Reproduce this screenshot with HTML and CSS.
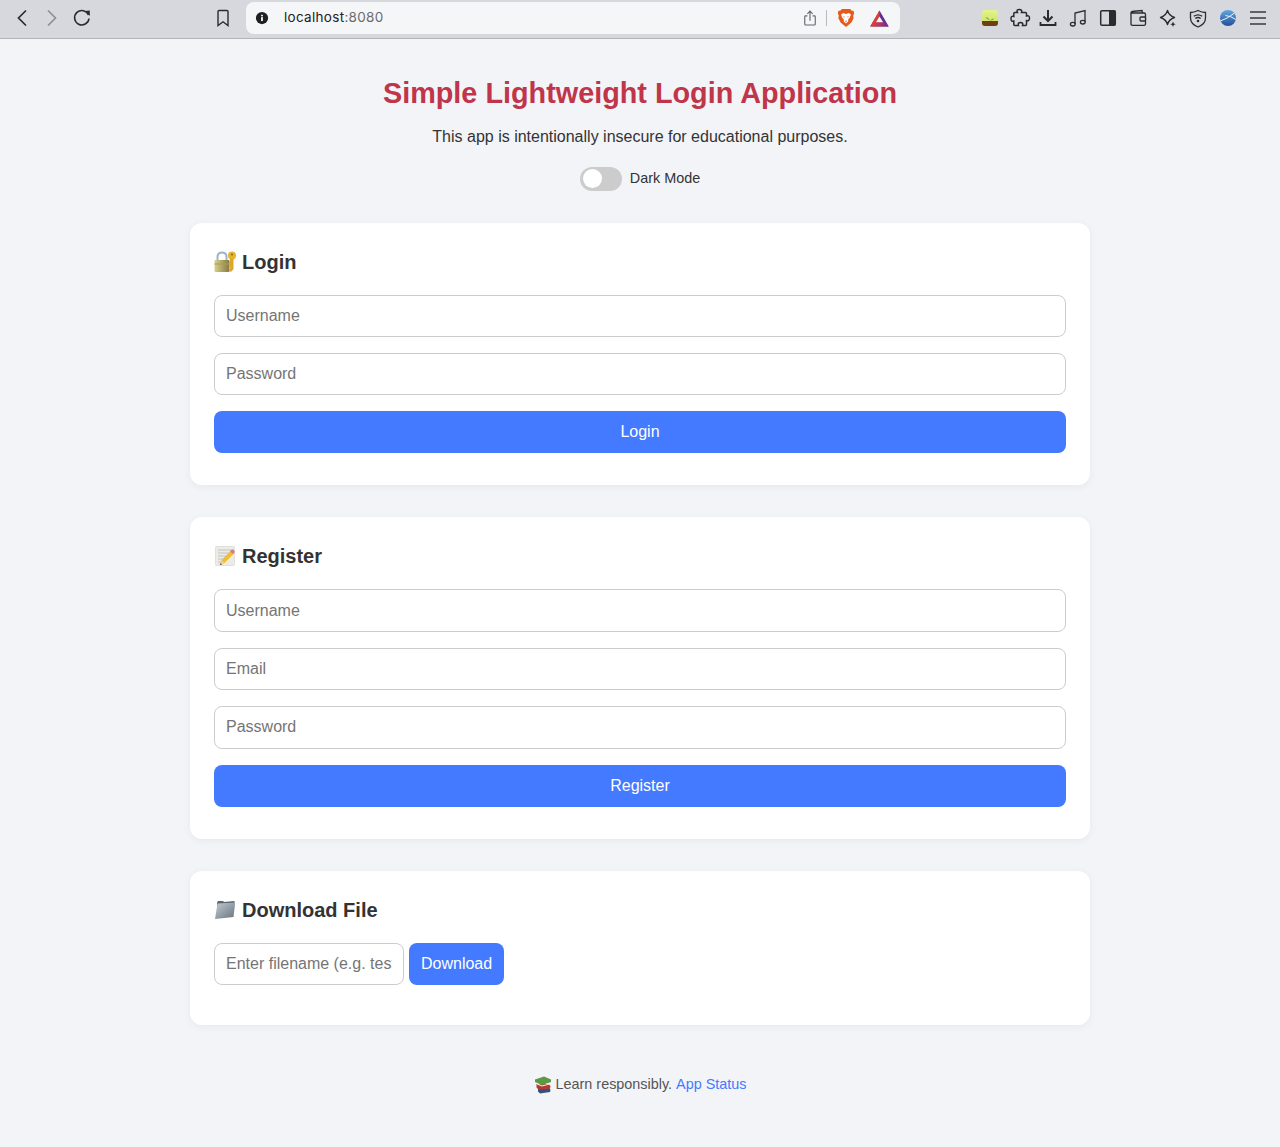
FILE: index.html
```html
<!DOCTYPE html>
<html lang="en">
<head>
  <meta charset="UTF-8" />
  <meta name="viewport" content="width=device-width, initial-scale=1.0" />
  <title>Simple Lightweight Login Application</title>
  <link rel="stylesheet" href="styles.css">
</head>
<body>
  <div class="toolbar">
    <div class="nav">
      <svg class="tool" viewBox="0 0 30 30"><path d="M19 7.5 L11.5 15 L19 22.5" fill="none" stroke="#2b2b2e" stroke-width="1.7"/></svg>
      <svg class="tool" viewBox="0 0 30 30"><path d="M11 7.5 L18.5 15 L11 22.5" fill="none" stroke="#8e8f94" stroke-width="1.7"/></svg>
      <svg class="tool" viewBox="0 0 30 30"><path d="M21.5 12 A7.2 7.2 0 1 0 22 15.5" fill="none" stroke="#2b2b2e" stroke-width="1.6"/><path d="M18 8 L22.8 7.5 L22.8 13 Z" fill="#2b2b2e"/></svg>
    </div>
    <svg class="tool bookmark" viewBox="0 0 30 30"><path d="M10 8.5 Q10 7.5 11 7.5 L19 7.5 Q20 7.5 20 8.5 L20 22.5 L15 18.8 L10 22.5 Z" fill="none" stroke="#2b2b2e" stroke-width="1.4"/></svg>
    <div class="urlbar">
      <svg class="info" viewBox="0 0 16 16"><circle cx="8" cy="8" r="7" fill="#1f1f22"/><rect x="7" y="7" width="2" height="4.5" fill="#fff"/><rect x="7" y="4.3" width="2" height="1.8" fill="#fff"/></svg>
      <span class="url">localhost<span class="port">:8080</span></span>
      <svg class="share" viewBox="0 0 16 20"><path d="M5 7.5 L3 7.5 Q2 7.5 2 8.5 L2 17 Q2 18 3 18 L13 18 Q14 18 14 17 L14 8.5 Q14 7.5 13 7.5 L11 7.5" fill="none" stroke="#66676b" stroke-width="1.3"/><path d="M8 13 L8 2.5 M5 5.2 L8 2.2 L11 5.2" fill="none" stroke="#66676b" stroke-width="1.3"/></svg>
      <span class="divider"></span>
      <svg class="brave" viewBox="0 0 20 22"><path d="M5.5 1 L14.5 1 L16.5 3 L18.5 3 L19 6 L18 8.5 L18.5 11 L16 16 L10 21 L4 16 L1.5 11 L2 8.5 L1 6 L1.5 3 L3.5 3 Z" fill="#e8591c"/><path d="M7 5.5 L10 6.5 L13 5.5 L15.5 7 L14 11 L12.5 12.5 L12.5 15 L10 17 L7.5 15 L7.5 12.5 L6 11 L4.5 7 Z" fill="#fff"/><path d="M8.5 13.5 L10 14.5 L11.5 13.5 L10 16 Z" fill="#e8591c"/><path d="M7 9 L9 10 L7.5 10.5 Z M13 9 L11 10 L12.5 10.5 Z" fill="#e8591c"/></svg>
      <svg class="bat" viewBox="0 0 20 18"><defs><linearGradient id="batbase" x1="0" y1="0" x2="1" y2="0"><stop offset="0" stop-color="#e8452a"/><stop offset="0.45" stop-color="#c8344e"/><stop offset="1" stop-color="#662d91"/></linearGradient></defs><path d="M10 0.5 L19.8 17.5 L0.2 17.5 Z" fill="#662d91"/><path d="M10 0.5 L0.2 17.5 L5.5 13.5 L10 7 Z" fill="#e0402e"/><path d="M0.2 17.5 L5.5 13 L14.5 13 L19.8 17.5 Z" fill="url(#batbase)"/><path d="M10 7 L13.8 13 L6.2 13 Z" fill="#f5f6f8"/></svg>
    </div>
    <div class="extensions">
      <svg class="tool" viewBox="0 0 30 30"><defs><linearGradient id="sprout" x1="0" y1="0" x2="0" y2="1"><stop offset="0" stop-color="#e6f28a"/><stop offset="1" stop-color="#c4e266"/></linearGradient></defs><rect x="7" y="7" width="16" height="16" rx="3" fill="url(#sprout)"/><path d="M7 18 L23 18 L23 20 Q23 23 20 23 L10 23 Q7 23 7 20 Z" fill="#6d3f12"/><path d="M15 17.5 Q13 14 10.5 14 Q12 16.5 15 17.5 Q17 15.5 19.5 15.5 Q17.5 18 15 17.5 Z" fill="#6fa82f"/></svg>
      <svg class="tool" viewBox="0 0 30 30"><path d="M12.5 9.5 Q11 6.5 14.2 6.5 Q17.5 6.5 16.5 9.5 L20.5 9.5 Q21.5 9.5 21.5 10.5 L21.5 13 Q24.5 12 24.5 15 Q24.5 18.5 21.5 17.5 L21.5 21.5 Q21.5 22.5 20.5 22.5 L17.5 22.5 Q18.5 19.5 15.5 19.5 Q12.5 19.5 13.5 22.5 L9.8 22.5 Q8.8 22.5 8.8 21.5 L8.8 18 Q6 19 6 15.5 Q6 12.5 8.8 13.5 L8.8 10.5 Q8.8 9.5 9.8 9.5 Z" fill="none" stroke="#2b2b2e" stroke-width="1.5"/></svg>
      <svg class="tool download" viewBox="0 0 30 30"><path d="M15 7 L15 17.5 M10.5 13.5 L15 18 L19.5 13.5" fill="none" stroke="#2b2b2e" stroke-width="2"/><path d="M7.5 19 L7.5 22 L22.5 22 L22.5 19" fill="none" stroke="#2b2b2e" stroke-width="1.8"/></svg>
      <svg class="tool" viewBox="0 0 30 30"><path d="M12 21 L12 10 L22 7.5 L22 19" fill="none" stroke="#2b2b2e" stroke-width="1.3"/><ellipse cx="9.8" cy="21.2" rx="2.4" ry="1.8" fill="none" stroke="#2b2b2e" stroke-width="1.3"/><ellipse cx="19.8" cy="19.2" rx="2.4" ry="1.8" fill="none" stroke="#2b2b2e" stroke-width="1.3"/></svg>
      <svg class="tool" viewBox="0 0 30 30"><rect x="7.7" y="7.7" width="14.6" height="14.6" rx="1.2" fill="none" stroke="#2b2b2e" stroke-width="1.5"/><rect x="16" y="7.7" width="6.3" height="14.6" fill="#2b2b2e"/></svg>
      <svg class="tool" viewBox="0 0 30 30"><path d="M9 8.5 L19 7.5 L19.5 10 M8 10 Q8 8.5 9.5 8.5 M8 10 L21 10 Q22.5 10 22.5 11.5 L22.5 21 Q22.5 22.3 21 22.3 L9.5 22.3 Q8 22.3 8 21 Z" fill="none" stroke="#2b2b2e" stroke-width="1.3"/><rect x="17" y="14" width="5.5" height="4" rx="1" fill="#d7d8dd" stroke="#2b2b2e" stroke-width="1.3"/></svg>
      <svg class="tool" viewBox="0 0 30 30"><path d="M14.5 7.5 Q16 12.8 21.5 14.5 Q16 16.2 14.5 21.5 Q13 16.2 7.5 14.5 Q13 12.8 14.5 7.5 Z" fill="none" stroke="#2b2b2e" stroke-width="1.4" stroke-linejoin="round"/><path d="M20 18.5 L20.8 20.4 L22.7 21.2 L20.8 22 L20 23.9 L19.2 22 L17.3 21.2 L19.2 20.4 Z" fill="#2b2b2e"/></svg>
      <svg class="tool" viewBox="0 0 30 30"><path d="M15 7.5 Q19 9.5 22.5 9.5 L22.5 15 Q22.5 21 15 24 Q7.5 21 7.5 15 L7.5 9.5 Q11 9.500 15 7.5 Z" fill="none" stroke="#2b2b2e" stroke-width="1.3"/><path d="M10.8 13.3 Q15 10.3 19.2 13.3 M12.3 15.5 Q15 13.5 17.7 15.5" fill="none" stroke="#2b2b2e" stroke-width="1.3"/><circle cx="15" cy="18" r="1.3" fill="#2b2b2e"/></svg>
      <svg class="tool" viewBox="0 0 30 30"><defs><linearGradient id="globe" x1="0" y1="0" x2="0" y2="1"><stop offset="0" stop-color="#62a6dc"/><stop offset="1" stop-color="#234f9e"/></linearGradient></defs><circle cx="15" cy="15" r="8" fill="url(#globe)"/><path d="M7.3 18 Q14 16 21.5 10 M12.5 12.5 Q18 13 22.8 16.5" fill="none" stroke="#eef4fa" stroke-width="1"/></svg>
      <svg class="tool" viewBox="0 0 30 30"><path d="M7 9 L23 9 M7 15 L23 15 M7 21 L23 21" stroke="#3a3a3d" stroke-width="1.5"/></svg>
    </div>
  </div>

  <div class="container">
    <h1>Simple Lightweight Login Application</h1>
    <p class="subtitle">This app is intentionally insecure for educational purposes.</p>

    <div class="theme-row">
      <span class="switch"><span class="knob"></span></span>
      <span>Dark Mode</span>
    </div>

    <div class="card">
      <h2>
        <svg class="emoji" viewBox="0 0 22 22"><defs><linearGradient id="brass" x1="0" y1="0" x2="1" y2="0"><stop offset="0" stop-color="#d9cf8c"/><stop offset="1" stop-color="#85793c"/></linearGradient></defs><path d="M3.5 10 L3.5 6 Q3.5 1.5 8 1.5 Q12.5 1.5 12.5 6 L12.5 10" fill="none" stroke="#9db4cc" stroke-width="2"/><rect x="0.5" y="9" width="15" height="12" rx="1" fill="url(#brass)"/><rect x="0.5" y="12.5" width="15" height="1" fill="#a89c58"/><circle cx="18" cy="4.5" r="4" fill="#e6b52e"/><circle cx="18" cy="3.5" r="1.1" fill="#8f6b14"/><path d="M16 7.5 L19.5 7.5 L19.5 18 L17 21 L15.5 20 L15.5 18 L16.5 17 L15.5 15.5 Z" fill="#dca829"/></svg>
        Login
      </h2>
      <form>
        <input type="text" placeholder="Username" />
        <input type="password" placeholder="Password" />
        <button type="button" class="wide">Login</button>
      </form>
    </div>

    <div class="card">
      <h2>
        <svg class="emoji" viewBox="0 0 22 22"><rect x="1.5" y="1.5" width="19" height="19" rx="1" fill="#ecebe6" stroke="#d3d2cc" stroke-width="0.6"/><path d="M4 5 L18 5 M4 8 L17 8 M4 11 L12 11 M4 14 L9 14 M4 17 L7 17" stroke="#b8b8b6" stroke-width="0.8"/><path d="M6 20 L7.5 15 L17 5.5 L20 8.5 L10.5 18 Z" fill="#f0bd38"/><path d="M16 6.5 L17.5 4.7 Q18.5 4 19.5 4.7 L20.5 6 Q21 7 20.2 8 L19 9 Z" fill="#e2768a"/><path d="M6 20 L7.5 15 L10.5 18 Z" fill="#e9cfa2"/><path d="M6 20 L6.6 18 L8 19.4 Z" fill="#444"/></svg>
        Register
      </h2>
      <form>
        <input type="text" placeholder="Username" />
        <input type="email" placeholder="Email" />
        <input type="password" placeholder="Password" />
        <button type="button" class="wide">Register</button>
      </form>
    </div>

    <div class="card">
      <h2>
        <svg class="emoji" viewBox="0 0 22 22"><defs><linearGradient id="folder" x1="0" y1="0" x2="1" y2="1"><stop offset="0" stop-color="#c3ccd3"/><stop offset="1" stop-color="#66737e"/></linearGradient></defs><path d="M3 4 L4 2 L9 2 L10 3 L20.5 2 L20 14 L3 15 Z" fill="#59646d"/><path d="M3.5 4.5 L21 3.5 L19.5 18 L1 20 Z" fill="url(#folder)"/></svg>
        Download File
      </h2>
      <form class="download-row">
        <input type="text" placeholder="Enter filename (e.g. test.txt)" />
        <button type="button">Download</button>
      </form>
    </div>

    <footer>
      <svg class="emoji-small" viewBox="0 0 18 18"><path d="M4 12.5 L15.5 12 L16.5 14 L16 16 L6 17.5 L4 15.5 Z" fill="#3b4f7c"/><path d="M2.5 8 L14.5 8 L16.5 10 L16 12.5 L4.5 13.5 L2.5 11.5 Z" fill="#b23a33"/><path d="M3 7 L8 9.5 L15.5 7.5 L15.5 8.5 L8 10.5 L3 8.5 Z" fill="#eee"/><path d="M1 3.5 L10 0.5 L17 3.5 L17 6 L8 9 L1 6 Z" fill="#5a9a45"/></svg>
      Learn responsibly. <a href="#">App Status</a>
    </footer>
  </div>
</body>
</html>
```

FILE: styles.css
```css
body {
  font-family: "Liberation Sans", Arial, sans-serif;
  background: #f2f4f8;
  color: #333;
  margin: 0;
  line-height: 1.6;
}

/* browser chrome */
.toolbar {
  display: flex;
  align-items: center;
  height: 36px;
  padding-bottom: 2px;
  background: #d7d8dd;
  border-bottom: 1px solid #b4b4b8;
  font-family: Inter, sans-serif;
}
.nav {
  display: flex;
  margin-left: 7px;
}
.tool {
  width: 30px;
  height: 30px;
  flex: none;
}
.bookmark {
  margin-left: 111px;
}
.urlbar {
  display: flex;
  align-items: center;
  width: 654px;
  height: 32px;
  margin-left: 8px;
  background: #f5f6f8;
  border-radius: 8px;
}
.info {
  width: 14px;
  height: 14px;
  margin-left: 9px;
}
.url {
  margin-left: 15px;
  font-size: 13.5px;
  letter-spacing: 0.3px;
  color: #222;
}
.port {
  color: #6b6c70;
}
.share {
  width: 14px;
  height: 18px;
  margin-left: auto;
}
.divider {
  width: 1px;
  height: 16px;
  margin-left: 9px;
  background: #b9babd;
}
.brave {
  width: 18px;
  height: 20px;
  margin-left: 10px;
}
.bat {
  width: 19px;
  height: 17px;
  margin-left: 15px;
  margin-right: 11px;
}
.extensions {
  display: flex;
  margin-left: 75px;
}
.download {
  margin-left: -2px;
}

/* page */
.container {
  width: 900px;
  margin: 0 auto;
  padding-top: 31px;
}
h1 {
  margin: 0 0 8px;
  font-size: 28.8px;
  text-align: center;
  color: #c0354a;
}
.subtitle {
  margin: 0 0 17px;
  text-align: center;
}
.theme-row {
  display: flex;
  justify-content: center;
  align-items: center;
  gap: 8px;
  height: 24px;
  margin-bottom: 32px;
  font-size: 14.4px;
}
.switch {
  display: flex;
  align-items: center;
  width: 42px;
  height: 24px;
  padding-left: 3px;
  box-sizing: border-box;
  background: #ccc;
  border-radius: 12px;
}
.knob {
  width: 19px;
  height: 19px;
  background: #fff;
  border-radius: 50%;
}
.card {
  background: #fff;
  padding: 24px 24px 8px;
  margin-bottom: 32px;
  border-radius: 12px;
  box-shadow: 0 2px 8px rgba(0, 0, 0, 0.05);
}
h2 {
  display: flex;
  align-items: center;
  gap: 6px;
  margin: 0 0 18px;
  font-size: 20px;
  line-height: 30px;
  color: #333;
}
.emoji {
  width: 22px;
  height: 22px;
  flex: none;
}
input {
  display: block;
  width: 100%;
  height: 42.4px;
  padding: 0 11px;
  margin-bottom: 16px;
  box-sizing: border-box;
  font-family: inherit;
  font-size: 16px;
  background: #fff;
  border: 1px solid #ccc;
  border-radius: 8px;
}
button {
  height: 42px;
  padding: 0 12px;
  font-family: inherit;
  font-size: 16px;
  color: #fff;
  background: #447aff;
  border: none;
  border-radius: 8px;
}
.wide {
  display: block;
  width: 100%;
  margin-bottom: 24px;
}
.download-row {
  display: flex;
  gap: 5px;
  padding-bottom: 16px;
}
.download-row input {
  width: 190px;
}
footer {
  display: flex;
  justify-content: center;
  align-items: center;
  gap: 4px;
  margin-top: 48px;
  font-size: 14.4px;
  color: #555;
}
footer a {
  color: #447aff;
  text-decoration: none;
}
.emoji-small {
  width: 18px;
  height: 18px;
}
```
